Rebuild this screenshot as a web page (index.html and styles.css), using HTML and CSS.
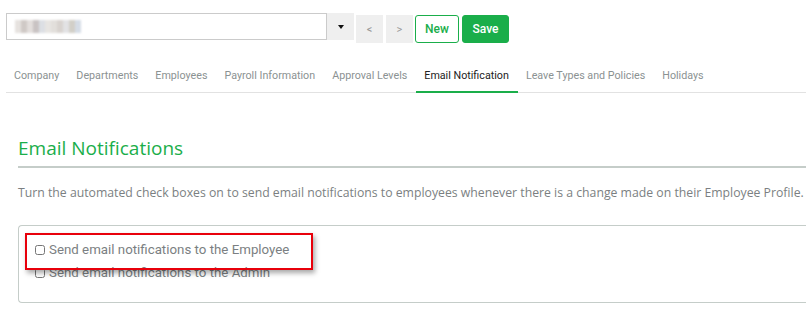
FILE: index.html
```html
<!DOCTYPE html>
<html lang="en">
<head>
  <meta charset="UTF-8" />
  <meta name="viewport" content="width=device-width, initial-scale=1.0"/>
  <title>Company Settings</title>
  <link rel="stylesheet" href="styles.css">
</head>
<body>
  <div class="toolbar">
    <div class="select">
      <div class="blurred">
        <span style="background:#e6e2df"></span><span style="background:#cfc9c6"></span><span style="background:#e3dedc"></span><span style="background:#c9c3c3"></span><span style="background:#dcdfe4"></span><span style="background:#e7e5e2"></span><span style="background:#e2dfdb"></span><span style="background:#d8d3cf"></span><span style="background:#e2e2e4"></span><span style="background:#d2cfc8"></span><span style="background:#d5dce6"></span>
      </div>
    </div>
    <div class="caret"><span class="arrow"></span></div>
    <button class="nav-btn">&lt;</button>
    <button class="nav-btn">&gt;</button>
    <button class="btn-new">New</button>
    <button class="btn-save">Save</button>
  </div>

  <ul class="tabs">
    <li>Company</li>
    <li>Departments</li>
    <li>Employees</li>
    <li>Payroll Information</li>
    <li>Approval Levels</li>
    <li class="active">Email Notification</li>
    <li>Leave Types and Policies</li>
    <li>Holidays</li>
  </ul>

  <div class="content">
    <h2>Email Notifications</h2>
    <p class="intro">Turn the automated check boxes on to send email notifications to employees whenever there is a change made on their Employee Profile.</p>

    <div class="panel">
      <label class="check"><input type="checkbox"> Send email notifications to the Employee</label>
      <label class="check"><input type="checkbox"> Send email notifications to the Admin</label>
      <div class="highlight"></div>
    </div>
  </div>
</body>
</html>
```

FILE: styles.css
```css
body {
  margin: 0;
  background: #fff;
  font-family: Roboto, "Liberation Sans", sans-serif;
  overflow: hidden;
}
.toolbar {
  display: flex;
  align-items: flex-start;
  padding: 13px 0 0 6px;
}
.select {
  height: 25px;
  border: 1px solid #cbcbcb;
  display: flex;
  align-items: center;
  padding-left: 8px;
  box-sizing: content-box;
  width: 311px;
}
.blurred {
  display: grid;
  grid-template-columns: repeat(11, 6px);
  height: 13px;
  filter: blur(1px);
}
.blurred span {
  display: block;
}
.caret {
  width: 27px;
  height: 27px;
  background: #efefef;
  display: flex;
  align-items: center;
  justify-content: center;
}
.arrow {
  width: 0;
  height: 0;
  border-left: 3.5px solid transparent;
  border-right: 3.5px solid transparent;
  border-top: 4px solid #111;
}
button {
  font-family: Roboto, "Liberation Sans", sans-serif;
  cursor: pointer;
  margin-top: 2px;
  height: 28px;
  padding: 0;
}
.nav-btn {
  width: 27px;
  margin-left: 2px;
  margin-right: 1px;
  border: none;
  background: #efefef;
  color: #9a9a9a;
  font-size: 11px;
}
.btn-new {
  width: 44px;
  margin-left: 1px;
  background: #fff;
  border: 1px solid #1aae4a;
  border-radius: 3px;
  color: #1aae4a;
  font-size: 12px;
  font-weight: 500;
}
.btn-save {
  width: 47px;
  margin-left: 3px;
  background: #1aae4a;
  border: 1px solid #1aae4a;
  border-radius: 3px;
  color: #fff;
  font-size: 12px;
  font-weight: 500;
}
.tabs {
  list-style: none;
  display: flex;
  margin: 15px 0 0 6px;
  padding: 0;
  border-bottom: 1px solid #e2e2e2;
}
.tabs li {
  padding: 10px 9px 8px 8px;
  font-size: 10.72px;
  line-height: 15px;
  color: #8b9292;
  border-bottom: 2px solid transparent;
  margin-bottom: -1px;
}
.tabs li.active {
  color: #222;
  border-bottom-color: #1aae4a;
}
.content {
  padding: 0 0 0 18px;
}
h2 {
  font-family: "Open Sans", sans-serif;
  font-weight: 400;
  font-size: 19px;
  color: #1aae4a;
  margin: 42px 0 0;
  line-height: 27px;
  padding-bottom: 4px;
  border-bottom: 2px solid #c5cdc9;
}
.intro {
  font-family: "Open Sans", sans-serif;
  font-size: 12.25px;
  color: #7b7f82;
  margin: 16px 0 0;
  white-space: nowrap;
}
.panel {
  position: relative;
  margin-top: 24px;
  border: 1px solid #c5cdc9;
  border-right: none;
  border-radius: 4px 0 0 4px;
  height: 78px;
  padding: 12px 0 0 16px;
  box-sizing: border-box;
}
.check {
  display: flex;
  align-items: center;
  font-size: 13.3px;
  color: #7b7f82;
  line-height: 23px;
}
.check input {
  margin: 0 4px 0 0;
  width: 10px;
  height: 10px;
}
.highlight {
  position: absolute;
  left: 6px;
  top: 7px;
  width: 284px;
  height: 33px;
  border: 2px solid #e8000b;
  box-shadow: 2px 3px 5px rgba(0,0,0,0.35);
}
```
